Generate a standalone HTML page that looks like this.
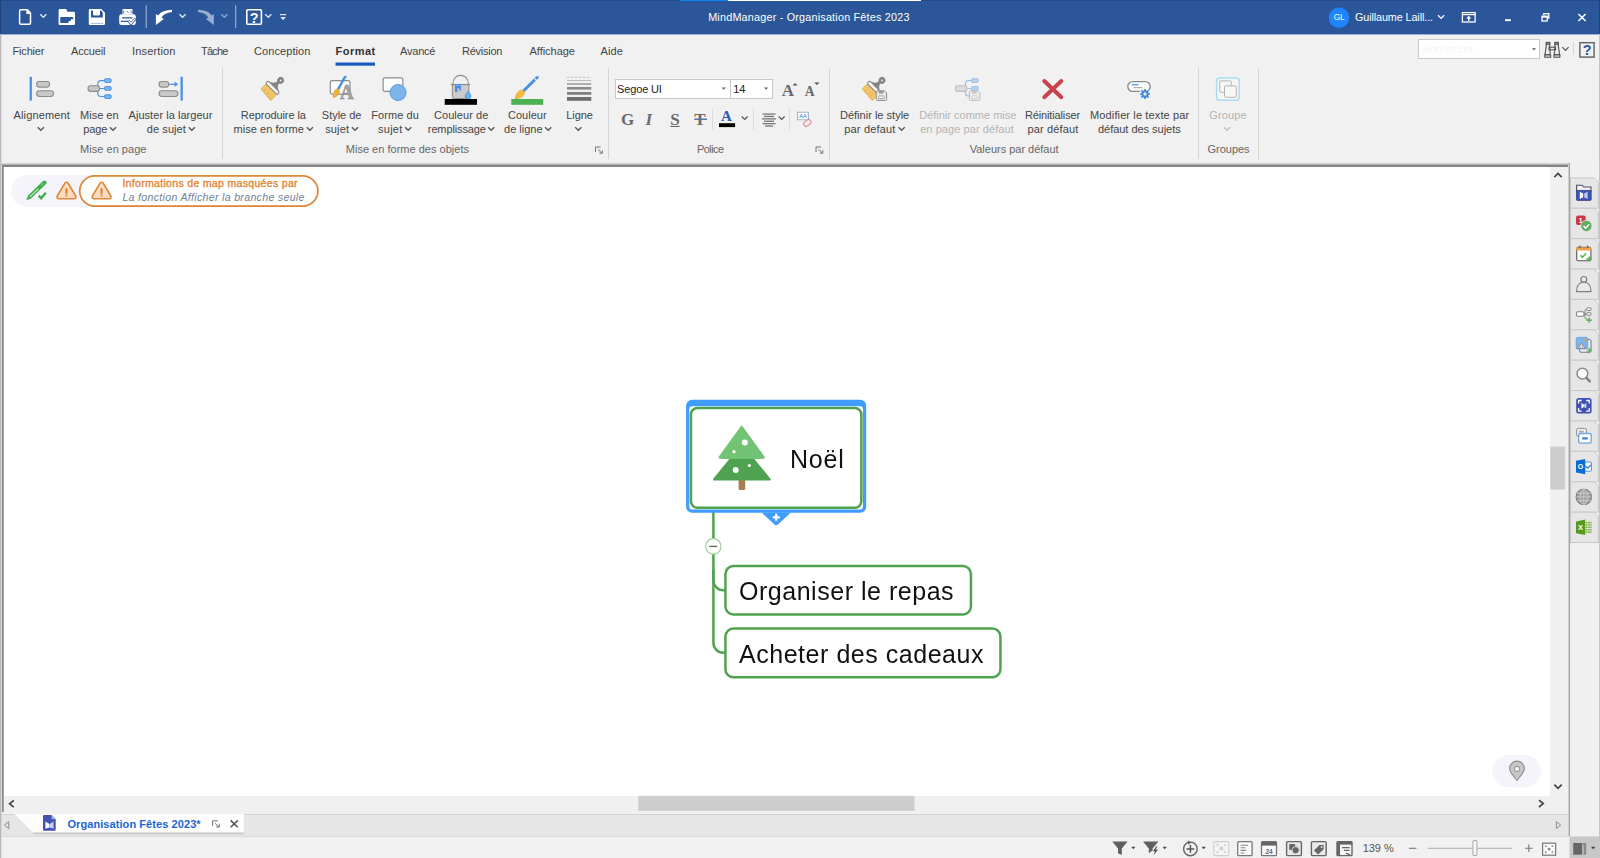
<!DOCTYPE html>
<html lang="fr"><head><meta charset="utf-8"><title>MindManager - Organisation Fêtes 2023</title>
<style>
html,body{margin:0;padding:0;}
body{width:1600px;height:858px;position:relative;overflow:hidden;background:#f1f1f1;font-family:"Liberation Sans",sans-serif;}
.abs{position:absolute;}
.t{position:absolute;white-space:pre;line-height:1;font-family:"Liberation Sans",sans-serif;}
#titlebar{left:0;top:0;width:1600px;height:34.4px;background:#2b579a;}
#ribbon{left:0;top:34px;width:1600px;height:129px;background:#f1f1f1;}
#canvas{left:3.5px;top:167px;width:1546.8px;height:628.8px;background:#fff;}
#hscroll{left:3.5px;top:795.8px;width:1564px;height:17.5px;background:#f0f0f0;}
#vscroll{left:1550.3px;top:167px;width:17.5px;height:628.8px;background:#f0f0f0;}
#tabbar{left:0;top:813.5px;width:1569px;height:22.5px;background:#e6e6e6;border-top:1px solid #d2d2d2;box-sizing:border-box;}
#status{left:0;top:836px;width:1600px;height:22px;background:#f1f1f1;border-top:1px solid #dadada;box-sizing:border-box;}
#side{left:1570px;top:163px;width:30px;height:673px;background:#f0f0f0;}
svg#ic{position:absolute;left:0;top:0;width:1600px;height:858px;}
.sep{position:absolute;width:1px;background:#d4d4d4;top:68px;height:91px;}
.combo{position:absolute;background:#fff;border:1px solid #c8c8c8;box-sizing:border-box;}

</style></head>
<body>
<div id="titlebar" class="abs"></div>
<div id="ribbon" class="abs"></div>
<div class="sep" style="left:222px"></div>
<div class="sep" style="left:608px"></div>
<div class="sep" style="left:829px"></div>
<div class="sep" style="left:1198px"></div>
<div class="sep" style="left:1258px"></div>
<div class="combo" style="left:615px;top:78.5px;width:115.5px;height:20.5px"></div>
<div class="combo" style="left:729.5px;top:78.5px;width:43px;height:20.5px"></div>
<div class="combo" style="left:1418.3px;top:39.3px;width:122px;height:19.8px"></div>
<div id="canvas" class="abs"></div>
<div id="hscroll" class="abs"></div>
<div id="vscroll" class="abs"></div>
<div id="tabbar" class="abs"></div>
<div id="status" class="abs"></div>
<div id="side" class="abs"></div>

<svg id="ic" viewBox="0 0 1600 858" width="1600" height="858">
<g id="titlebar-icons">
<rect x="0" y="0" width="1600" height="1" fill="#254a86"/>
<rect x="0" y="0" width="1" height="34.400" fill="#21417a"/>
<rect x="1599" y="0" width="1" height="34.400" fill="#21417a"/>
<rect x="0" y="33.400" width="1600" height="1" fill="#27529a"/>
<rect x="680" y="0" width="48" height="1" fill="#0a84ee"/>
<rect x="728" y="0" width="193" height="1" fill="#fdfdfd"/>
<!-- new document -->
<path d="M20.8 9.7h6.6l3.1 3.2v10.2a1.2 1.2 0 0 1-1.2 1.2h-8.5a1.2 1.2 0 0 1-1.2-1.2v-12.200a1.200 1.200 0 0 1 1.200-1.200z" fill="none" stroke="#fff" stroke-width="1.5" stroke-linejoin="round"/>
<path d="M26.400 9.700v4.400h4.300z" fill="#fff"/>
<path d="M40.200 14.200l3.100 3.100 3.100-3.100" fill="none" stroke="#dfe6f3" stroke-width="1.300"/>
<!-- open folder -->
<path d="M59.800 9h6.400l1.200 2.800h6.400a1.200 1.200 0 0 1 1.200 1.200v10.800a1.200 1.200 0 0 1-1.200 1.200h-14a1.200 1.200 0 0 1-1.200-1.200v-13.600a1.200 1.200 0 0 1 1.200-1.200z" fill="#fff"/>
<path d="M61 17h11.200a1 1 0 0 1 1 1v1.200h-2.400v1.800h-2.200v1.900h-7.600a.8.800 0 0 1-.8-.8v-4.300a.8.800 0 0 1 .8-.8z" fill="#2b579a"/>
<!-- save -->
<path d="M90 9h11.300l3.700 3.700v11.100a1.200 1.200 0 0 1-1.200 1.200h-13.800a1.200 1.200 0 0 1-1.200-1.200v-13.600a1.200 1.200 0 0 1 1.200-1.200z" fill="#fff"/>
<path d="M91 10.600h2v3.300a1.500 1.500 0 0 0 1.500 1.500h4a1.500 1.500 0 0 0 1.500-1.500v-3.300h1l1.800 1.900v5.100h-11.800z" fill="#2b579a"/>
<path d="M91.500 23.400h11.500" stroke="#2b579a" stroke-width=".7" stroke-dasharray="1.200 .8" fill="none"/>
<!-- print -->
<path d="M122.500 9h10v5.500h-10z" fill="#fff"/>
<path d="M123.600 10.500v3M131.200 10.500v3M126.800 11l1.800 2" stroke="#2b579a" stroke-width=".7" fill="none"/>
<path d="M121.500 14.300h12a2.300 2.300 0 0 1 2.300 2.300v6.200a2.200 2.200 0 0 1-2.200 2.200h-12.200a2.200 2.200 0 0 1-2.200-2.200v-6.200a2.300 2.300 0 0 1 2.300-2.300z" fill="#fff"/>
<path d="M122 17.900h10.500M121 21.400h8" stroke="#2b579a" stroke-width="1.100" fill="none"/>
<path d="M128.400 20.800l2.600 2.900 4.400-5" stroke="#2b579a" stroke-width="2.600" fill="none"/>
<path d="M128.800 21l2.200 2.500 4-4.600" stroke="#fff" stroke-width="1.300" fill="none"/>
<rect x="145.600" y="5.200" width="1.300" height="22.800" fill="#8ea3c8"/>
<!-- undo -->
<path d="M172 9.8C166 10 160.5 11.8 158.2 15.6L155.9 14L155.9 25L163.8 18.9L161.6 17.4C163.5 14.6 167 12.6 172 12.1Z" fill="#fff"/>
<path d="M179.400 14.200l3.100 3.100 3.100-3.100" fill="none" stroke="#dfe6f3" stroke-width="1.300"/>
<!-- redo (disabled) -->
<path d="M198 9.8C204 10 209.5 11.8 211.5 15.6L213.800 14L213.8 25L206 18.9L208.2 17.4C206.3 14.6 203 12.6 198 12.1Z" fill="#98aed0"/>
<path d="M221.200 14.200l3.100 3.100 3.100-3.100" fill="none" stroke="#8ea3c8" stroke-width="1.300"/>
<rect x="235" y="5.200" width="1.300" height="22.800" fill="#8ea3c8"/>
<!-- help -->
<rect x="246.800" y="9.800" width="14.600" height="14.400" rx="1" fill="none" stroke="#fff" stroke-width="1.600"/>
<text x="254.100" y="22.500" font-family="Liberation Sans, sans-serif" font-weight="bold" font-size="14.500" fill="#fff" text-anchor="middle">?</text>
<path d="M265.200 14.200l3.100 3.100 3.100-3.100" fill="none" stroke="#dfe6f3" stroke-width="1.300"/>
<path d="M280 14.600h6.200" stroke="#dfe6f3" stroke-width="1.200"/>
<path d="M280.300 17h5.600l-2.800 3.200z" fill="#dfe6f3"/>
<!-- account -->
<circle cx="1339" cy="17.750" r="10.200" fill="#1e84ff"/>
<path d="M1438 15.300l3.100 3.100 3.100-3.100" fill="none" stroke="#fff" stroke-width="1.300"/>
<!-- ribbon display -->
<rect x="1462.400" y="12.600" width="12.700" height="9.400" fill="none" stroke="#fff" stroke-width="1.300"/>
<path d="M1462.400 14.600h12.700" stroke="#fff" stroke-width="1.200"/>
<path d="M1468.750 15.800l2.600 2.800h-1.800v2.200h-1.600v-2.200h-1.800z" fill="#fff"/>
<!-- min / restore / close -->
<rect x="1505" y="19.200" width="5.800" height="1.900" fill="#fff"/>
<path d="M1543.800 15.200v-1.600h5v4.400h-1.600" fill="none" stroke="#fff" stroke-width="1.300"/>
<rect x="1542" y="16.200" width="5.200" height="4.800" fill="none" stroke="#fff" stroke-width="1.300"/>
<path d="M1542 17h5.200" stroke="#fff" stroke-width="1.400"/>
<path d="M1578.400 14l7.200 7M1585.600 14l-7.200 7" stroke="#fff" stroke-width="1.500"/>
</g>
<g id="ribbon-icons">
<!-- tab underline -->
<rect x="335.500" y="62.500" width="39.500" height="3.200" fill="#185abd"/>
<!-- search area -->
<path d="M1531.900 48.200h4.200l-2.100 2.300z" fill="#666"/>
<g fill="none" stroke="#5a5a5a" stroke-width="1.200">
<rect x="1546.200" y="42.400" width="3.600" height="1.800"/><rect x="1554.800" y="42.400" width="3.600" height="1.800"/>
<path d="M1546.500 44.200l-1.500 10.500h5.200l-.6-10.500zM1558.100 44.200l1.500 10.500h-5.200l.6-10.500z"/>
<rect x="1544.800" y="54.800" width="5.800" height="2.400"/><rect x="1554" y="54.800" width="5.800" height="2.400"/>
<rect x="1549" y="47.200" width="6.600" height="2.600"/>
</g>
<path d="M1562.400 47.200l3.100 3.100 3.100-3.100" fill="none" stroke="#555" stroke-width="1.200"/>
<rect x="1573" y="42.800" width="1" height="12.500" fill="#d8d8d8"/>
<rect x="1579.900" y="42.700" width="14.200" height="14.400" fill="none" stroke="#606060" stroke-width="1.400"/>
<text x="1587.100" y="55.200" font-family="Liberation Sans, sans-serif" font-weight="bold" font-size="14.500" fill="#2b579a" text-anchor="middle">?</text>

<!-- Alignement -->
<rect x="29.600" y="76.800" width="2.300" height="23.800" fill="#4a90e2"/>
<rect x="36.600" y="81.500" width="13" height="5.600" rx="2.800" fill="#c8c8c8" stroke="#8c8c8c" stroke-width="1.100"/>
<rect x="36.600" y="90.700" width="17" height="5.800" rx="2.900" fill="#c8c8c8" stroke="#8c8c8c" stroke-width="1.100"/>
<!-- Mise en page -->
<g fill="none" stroke="#4a90e2" stroke-width="1.100">
<path d="M100 88.500h4.500M104.500 80.600h-3.500a3.200 3.200 0 0 0-3.200 3.200v9.500a3.200 3.200 0 0 0 3.200 3.200h3.500"/>
</g>
<rect x="88" y="85.800" width="11.600" height="5.600" rx="2.800" fill="#c8c8c8" stroke="#8c8c8c" stroke-width="1.100"/>
<g fill="#7db7f0" stroke="#4a90e2" stroke-width="1">
<rect x="104.500" y="78.800" width="6.600" height="3.600" rx="1"/><rect x="104.500" y="86.600" width="6.600" height="3.600" rx="1"/><rect x="104.500" y="94.800" width="6.600" height="3.600" rx="1"/>
</g>
<!-- Ajuster la largeur -->
<rect x="180.500" y="76.800" width="2.300" height="23.800" fill="#4a90e2"/>
<rect x="159" y="81.500" width="9.800" height="5.600" rx="2.800" fill="#c8c8c8" stroke="#8c8c8c" stroke-width="1.100"/>
<rect x="159" y="90.700" width="19" height="5.800" rx="2.900" fill="#c8c8c8" stroke="#8c8c8c" stroke-width="1.100"/>
<path d="M169.400 84.300h6" stroke="#4a90e2" stroke-width="1.300"/><path d="M174.600 81.600l3.600 2.700-3.600 2.700z" fill="#4a90e2"/>
<path d="M37.7 127.200l3.100 3.100 3.100-3.100" fill="none" stroke="#555" stroke-width="1.300"/>
<path d="M109.9 127.200l3.100 3.100 3.100-3.100" fill="none" stroke="#555" stroke-width="1.300"/>
<path d="M188.7 127.200l3.100 3.100 3.100-3.100" fill="none" stroke="#555" stroke-width="1.300"/>
<path d="M306.8 127.200l3.100 3.100 3.100-3.100" fill="none" stroke="#555" stroke-width="1.300"/>
<path d="M351.9 127.200l3.100 3.100 3.100-3.100" fill="none" stroke="#555" stroke-width="1.300"/>
<path d="M405.1 127.200l3.100 3.100 3.100-3.100" fill="none" stroke="#555" stroke-width="1.300"/>
<path d="M488.1 127.200l3.100 3.100 3.100-3.100" fill="none" stroke="#555" stroke-width="1.300"/>
<path d="M545.1 127.200l3.100 3.100 3.100-3.100" fill="none" stroke="#555" stroke-width="1.300"/>
<path d="M575.2 127.200l3.100 3.100 3.100-3.100" fill="none" stroke="#555" stroke-width="1.300"/>
<path d="M898.5 127.200l3.100 3.100 3.100-3.100" fill="none" stroke="#555" stroke-width="1.300"/>
<path d="M1223.9 127.200l3.100 3.100 3.100-3.100" fill="none" stroke="#c0c0c0" stroke-width="1.300"/>
<!-- Reproduire la mise en forme : brush -->
<g id="brush1" transform="translate(272.5 88) rotate(45)">
<path d="M-1.3-8.500C-1.300-5-4-3.400-7.600-1.800L7.600-1.800C4-3.400 1.300-5 1.300-8.500Z" fill="#858585"/>
<circle cx=".400" cy="-11.100" r="2.150" fill="none" stroke="#858585" stroke-width="2.500"/>
<path d="M-7.500 1.500L7.500 1.500L7.800 10.200L6.300 9.300L5.200 10.300L3.600 9L2.200 10L.600 8.800L-.900 9.800L-2.400 8.600L-3.800 9.500L-5.200 8.300L-6.400 9.200L-7.600 8.200Z" fill="#f2c568" stroke="#dba640" stroke-width=".700" stroke-linejoin="round"/>
<path d="M-3.800 5v4M.600 5.500v3M3.600 4.500v4" stroke="#dba640" stroke-width=".600" fill="none"/>
<rect x="-8.200" y="-2" width="16.400" height="3.600" rx="1.700" fill="#f6f6f6" stroke="#858585" stroke-width="1"/>
</g>
<!-- Style de sujet -->
<rect x="330.300" y="80.600" width="19.700" height="13.500" rx="1.800" fill="#fdfdfd" stroke="#8c8c8c" stroke-width="1.200"/>
<path d="M345.800 75.800l1.400.9-.6 1.200-1.600-1z" fill="#7db7f0"/>
<path d="M335.400 91.200l2.200 1.400-1 3.400-2.800 1.400-.4-3.200z" fill="#f0b84a" stroke="#d99a2b" stroke-width=".400"/>
<!-- Forme du sujet -->
<rect x="383.100" y="77.800" width="19.700" height="13.500" rx="1.800" fill="#fdfdfd" stroke="#8c8c8c" stroke-width="1.200"/>
<circle cx="398.100" cy="92.500" r="8" fill="#7db5e8" stroke="#5a9de0" stroke-width="1"/>
<!-- Couleur de remplissage -->
<path d="M452.700 84.500c0-12.200 15.800-12.200 15.800 0" fill="none" stroke="#8c8c8c" stroke-width="1.100"/>
<path d="M452.300 84.600h16.600v12a2 2 0 0 1-2 2h-12.600a2 2 0 0 1-2-2z" fill="#cbcbcb" stroke="#8c8c8c" stroke-width="1"/>
<path d="M450.800 84.500h19.400" stroke="#8c8c8c" stroke-width="1.100"/>
<path d="M455 84h6v6.400h-1.600v-2.200h-2v3.800h-2.400z" fill="#4a90e2"/>
<path d="M455.600 85.400h4.800" stroke="#8ec0f5" stroke-width=".700"/>
<path d="M468 91.200c1.600 2 3 3.500 3 5a3 3 0 0 1-6 0c0-1.500 1.400-3 3-5z" fill="#6fb0ee" stroke="#4a90e2" stroke-width=".700"/>
<rect x="444.700" y="99" width="32.300" height="5.800" fill="#000"/>
<!-- Couleur de ligne -->
<path d="M538.560 78.060L536.440 75.940L522.440 89.940L524.560 92.060Z" fill="#4a90e2"/>
<path d="M536.900 79.700L534.800 77.600L533.700 78.700L535.800 80.800Z" fill="#cfd8e6"/>
<path d="M538.900 76.900l-.8-.8-1.700.9 1.600 1.600z" fill="#4a90e2"/>
<path d="M522.440 89.940L524.560 92.060C525 95 521 98.500 515.300 98.900C515.600 93.500 519 89.800 522.440 89.940Z" fill="#f3bd3a" stroke="#d99a2b" stroke-width=".600"/>
<rect x="511.300" y="99" width="31.900" height="5.800" fill="#4caf50"/>
<!-- Ligne -->
<path d="M567 77.400h24.300" stroke="#b8b8b8" stroke-width=".800" stroke-dasharray="2.600 1.400"/>
<rect x="567" y="80" width="24.300" height=".800" fill="#b0b0b0"/>
<rect x="567" y="83.200" width="24.300" height="1.600" fill="#a0a0a0"/>
<rect x="567" y="87" width="24.300" height="2.600" fill="#8c8c8c"/>
<rect x="567" y="92" width="24.300" height="2.800" fill="#808080"/>
<rect x="567" y="97" width="24.300" height="3.800" fill="#6e6e6e"/>
<!-- dialog launchers -->
<g fill="none" stroke="#777" stroke-width="1">
<path d="M595.500 152v-5h5.200M598 149.500l4 3.600M602.300 150.200v3h-3"/>
<path d="M816 152v-5h5.200M818.500 149.500l4 3.600M822.800 150.200v3h-3"/>
</g>
<!-- A in style icon -->
<text x="346.900" y="98.900" font-family="Liberation Serif, serif" font-weight="bold" font-size="21" fill="#a4a4a4" stroke="#858585" stroke-width=".500" text-anchor="middle" textLength="13.600" lengthAdjust="spacingAndGlyphs">A</text>
<path d="M346.350 76.830L344.250 75.670L337.050 88.820L339.150 89.980Z" fill="#4a90e2"/>
<path d="M337.050 88.820L339.150 89.980C340.400 92 338.600 95.200 333.400 97.600C332.600 93.600 334.400 90 337.050 88.820Z" fill="#f0b429" stroke="#d99a2b" stroke-width=".500"/>
<path d="M335.400 91.200l2.200 1.400-1 3.400-2.800 1.400-.4-3.200z" fill="#f0b84a" stroke="#d99a2b" stroke-width=".400"/>
<!-- combos arrows -->
<path d="M721.500 87.400h4.400l-2.200 2.400z" fill="#666"/>
<path d="M763.900 87.400h4.400l-2.200 2.400z" fill="#666"/>
<!-- grow/shrink markers -->
<path d="M792.600 85.400h5l-2.500-2.500z" fill="#555"/>
<path d="M814.200 82.600h5.400l-2.700 2.500z" fill="#555"/>
<!-- S underline, T strike -->
<rect x="670.400" y="125.900" width="9.200" height="1.100" fill="#6a6a6a"/>
<rect x="694.200" y="118.600" width="12.800" height="1.200" fill="#2a5db0"/>
<rect x="712" y="108.400" width="1" height="21.600" fill="#dcdcdc"/>
<rect x="719" y="123.200" width="16.100" height="3.900" fill="#000"/>
<path d="M741.700 116.500l3 3 3-3" fill="none" stroke="#555" stroke-width="1.200"/>
<rect x="753" y="108.400" width="1" height="21.600" fill="#dcdcdc"/>
<!-- align icon -->
<g fill="#777">
<rect x="762.500" y="113.400" width="13" height="1.300"/><rect x="764" y="115.800" width="10" height="1.300"/><rect x="762" y="118.200" width="14" height="1.300"/><rect x="764" y="120.600" width="10" height="1.300"/><rect x="762.500" y="123" width="13" height="1.300"/><rect x="765" y="125.400" width="8" height="1.300"/>
</g>
<path d="M778.800 116.500l2.900 2.900 2.900-2.900" fill="none" stroke="#555" stroke-width="1.200"/>
<rect x="789" y="108.400" width="1" height="21.600" fill="#dcdcdc"/>
<!-- clear format -->
<rect x="797.500" y="112.200" width="11" height="7.600" fill="#f7fbff" stroke="#8aa9c9" stroke-width=".800"/>
<text x="803" y="118.200" font-family="Liberation Sans, sans-serif" font-size="5.500" fill="#3a78c2" text-anchor="middle">AA</text>
<rect x="-3.800" y="-2.300" width="7.600" height="4.600" rx="1.300" transform="translate(807.300 123) rotate(-38)" fill="#fbeaea" stroke="#d98a8a" stroke-width="1"/>
<g id="brush2" transform="translate(873.9 88) rotate(45)">
<path d="M-1.3-8.500C-1.300-5-4-3.400-7.600-1.800L7.600-1.800C4-3.400 1.300-5 1.300-8.500Z" fill="#858585"/>
<circle cx=".400" cy="-11.100" r="2.150" fill="none" stroke="#858585" stroke-width="2.500"/>
<path d="M-7.500 1.500L7.500 1.500L7.800 10.200L6.300 9.300L5.200 10.300L3.600 9L2.200 10L.600 8.800L-.900 9.800L-2.400 8.600L-3.800 9.500L-5.200 8.300L-6.400 9.200L-7.600 8.200Z" fill="#f2c568" stroke="#dba640" stroke-width=".700" stroke-linejoin="round"/>
<path d="M-3.800 5v4M.600 5.500v3M3.600 4.500v4" stroke="#dba640" stroke-width=".600" fill="none"/>
<rect x="-8.200" y="-2" width="16.400" height="3.600" rx="1.700" fill="#f6f6f6" stroke="#858585" stroke-width="1"/>
</g>
<!-- disk overlay -->
<g id="disk1">
<path d="M877.200 90.800h7.200l2.200 2.200v6.400a1 1 0 0 1-1 1h-8.400a1 1 0 0 1-1-1v-7.600a1 1 0 0 1 1-1z" fill="#e9e9e9" stroke="#8a8a8a" stroke-width="1"/>
<rect x="878.800" y="90.800" width="4.600" height="2.800" fill="#9a9a9a"/>
<rect x="878.600" y="96" width="5.600" height="2.600" rx=".600" fill="#fff" stroke="#8a8a8a" stroke-width=".800"/>
</g>
<!-- disabled layout icon -->
<g opacity=".5">
<g fill="none" stroke="#4a90e2" stroke-width="1.100"><path d="M967.500 88.500h4M971.500 80.600h-3a3 3 0 0 0-3 3v9.500a3 3 0 0 0 3 3h1"/></g>
<rect x="955.400" y="85.800" width="11.600" height="5.600" rx="2.800" fill="#c8c8c8" stroke="#8c8c8c" stroke-width="1.100"/>
<g fill="#7db7f0" stroke="#4a90e2" stroke-width="1"><rect x="971.600" y="78.800" width="6.600" height="3.600" rx="1"/><rect x="971.600" y="86.600" width="6.600" height="3.600" rx="1"/></g>
<g transform="translate(93.200 0)">
<path d="M877.200 90.800h7.200l2.200 2.200v6.400a1 1 0 0 1-1 1h-8.400a1 1 0 0 1-1-1v-7.600a1 1 0 0 1 1-1z" fill="#e9e9e9" stroke="#8a8a8a" stroke-width="1"/>
<rect x="878.800" y="90.800" width="4.600" height="2.800" fill="#9a9a9a"/>
<rect x="878.600" y="96" width="5.600" height="2.600" rx=".600" fill="#fff" stroke="#8a8a8a" stroke-width=".800"/>
</g>
</g>
<!-- red X -->
<path d="M1044.300 81l17 16.200M1061.300 81l-17 16.200" stroke="#c9424a" stroke-width="4" stroke-linecap="round"/>
<!-- modify text icon -->
<rect x="1127.800" y="81.600" width="22.400" height="9.800" rx="4.900" fill="#fafafa" stroke="#8c8c8c" stroke-width="1.400"/>
<path d="M1132 84.800h6.600" stroke="#4a90e2" stroke-width="1.200"/><path d="M1133.600 87.600h8.400" stroke="#a8a8a8" stroke-width="1.100"/>
<circle cx="1145" cy="94" r="5.800" fill="#f1f1f1"/>
<g transform="translate(1145 94)" stroke="#3d86d8" fill="none">
<circle r="2.600" stroke-width="1.900"/>
<path d="M0-5v2M0 3v2M-5 0h2M3 0h2M-3.540-3.540l1.420 1.420M2.120 2.120l1.420 1.420M-3.540 3.540l1.420-1.420M2.120-2.120l1.420-1.420" stroke-width="1.700"/>
</g>
<!-- Groupe -->
<rect x="1216.600" y="77.900" width="22.600" height="22.400" rx="3.200" fill="#f7f7f7" stroke="#a9ddf3" stroke-width="1.500"/>
<rect x="1219.700" y="80.900" width="11.600" height="11.400" rx=".800" fill="#f7f7f7" stroke="#b4b4b4" stroke-width="1"/>
<rect x="1224.500" y="85.900" width="11.800" height="11.400" rx=".800" fill="#f7f7f7" stroke="#b4b4b4" stroke-width="1"/>
</g>
<g id="canvas-art">
<!-- frame lines -->
<rect x="0" y="34" width="1.300" height="824" fill="#b8b8b8"/>
<rect x="1599" y="34" width="1" height="824" fill="#c4c4c4"/>
<rect x="0" y="162.800" width="1570" height="1.200" fill="#d6d6d6"/>
<rect x="0" y="164" width="1568" height="1" fill="#b0b0b0"/>
<rect x="2" y="165" width="1566" height="2" fill="#848484"/>
<rect x="2" y="165" width="1.700" height="647" fill="#848484"/>
<rect x="1568" y="163" width="1" height="673" fill="#cfcfcf"/>
<rect x="1569" y="163" width="1" height="673" fill="#a4a4a4"/>
<!-- info pills -->
<rect x="11.300" y="175" width="120" height="32" rx="16" fill="#f4f4fa"/>
<rect x="79.700" y="175.850" width="238.200" height="30.300" rx="15.150" fill="#fff" stroke="#de8435" stroke-width="1.700"/>
<!-- pen + check -->
<g transform="translate(36.250 190.600) rotate(-44)">
<path d="M-13.900 0l4.600-2.100h20.800a2.100 2.100 0 0 1 0 4.200h-20.800z" fill="#3bb04a"/>
<path d="M-9 0h12" stroke="#d5f0da" stroke-width="1" fill="none"/>
<path d="M7 -.300h3" stroke="#bfe8c6" stroke-width=".800" fill="none"/>
</g>
<path d="M38.700 195.600l2.500 2.700 4.600-5.500" fill="none" stroke="#3bb04a" stroke-width="2.300"/>
<!-- warnings -->
<g id="warn">
<path d="M64.95 183.11A1.80 1.80 0 0 1 68.05 183.11L75.72 196.03A1.80 1.80 0 0 1 74.17 198.75L58.83 198.75A1.80 1.80 0 0 1 57.28 196.03Z" fill="#f9dcc0" stroke="#e0883c" stroke-width="1.700"/>
<rect x="65.500" y="188.300" width="1.900" height="6" rx=".500" fill="#df7a22"/><rect x="65.500" y="195" width="1.900" height="1.600" rx=".500" fill="#df7a22"/>
</g>
<g transform="translate(35.100 0)">
<path d="M64.95 183.11A1.80 1.80 0 0 1 68.05 183.11L75.72 196.03A1.80 1.80 0 0 1 74.17 198.75L58.83 198.75A1.80 1.80 0 0 1 57.28 196.03Z" fill="#f9dcc0" stroke="#e0883c" stroke-width="1.700"/>
<rect x="65.500" y="188.300" width="1.900" height="6" rx=".500" fill="#df7a22"/><rect x="65.500" y="195" width="1.900" height="1.600" rx=".500" fill="#df7a22"/>
</g>
<!-- mind map -->
<g fill="none" stroke="#4fa24f" stroke-width="2.500">
<path d="M713.400 512v68.300a10 10 0 0 0 10 10h2"/>
<path d="M713.400 570v72.800a10 10 0 0 0 10 10h2"/>
</g>
<rect x="686.100" y="399.800" width="180.100" height="112.900" rx="6" fill="#409cff"/>
<path d="M761.500 512.500h29.400l-13 12a2.500 2.500 0 0 1-3.400 0z" fill="#409cff"/>
<path d="M776.200 513.800v7M772.700 517.300h7" stroke="#fff" stroke-width="2.200"/>
<rect x="689.300" y="406.300" width="173.700" height="103.200" rx="3" fill="#fff"/>
<rect x="690.950" y="408.050" width="170.400" height="99.800" rx="6.500" fill="#fff" stroke="#4fa24f" stroke-width="2.500"/>
<rect x="725.450" y="566.050" width="245.500" height="48.400" rx="8" fill="#fff" stroke="#4fa24f" stroke-width="2.500"/>
<rect x="725.450" y="628.450" width="275" height="48.700" rx="8" fill="#fff" stroke="#4fa24f" stroke-width="2.500"/>
<circle cx="713.300" cy="546.400" r="7.700" fill="#fff" stroke="#9fce9f" stroke-width="1.200"/>
<rect x="709.400" y="545.700" width="7.800" height="1.400" fill="#666"/>
<!-- tree -->
<rect x="738.600" y="478" width="6.600" height="12" rx="1.600" fill="#a67c52"/>
<path d="M741.900 443.500l28.600 35.200a1.200 1.200 0 0 1-.9 1.900h-55.400a1.200 1.200 0 0 1-.9-1.900z" fill="#4fa350"/>
<path d="M741.700 425.800l22.400 30.800a1.200 1.200 0 0 1-1 1.900h-42.800a1.200 1.200 0 0 1-1-1.900z" fill="#72c474" stroke="#72c474" stroke-width="1" stroke-linejoin="round"/>
<circle cx="744.800" cy="442.500" r="3" fill="#fff"/><circle cx="734" cy="451.700" r="1.600" fill="#fff"/>
<circle cx="735.700" cy="470" r="3" fill="#fff"/><circle cx="749.400" cy="465.500" r="1.600" fill="#fff"/>
<!-- location pill -->
<rect x="1492.400" y="755.100" width="48.600" height="32.100" rx="16" fill="#f4f4fa"/>
<path d="M1517 780.400c-3.600-4.600-7.400-8-7.400-11.900a7.400 7.400 0 0 1 14.800 0c0 3.900-3.800 7.300-7.400 11.900z" fill="#c6c6c6" stroke="#8e8e8e" stroke-width="1.100"/>
<circle cx="1517" cy="768.900" r="2.500" fill="#fff" stroke="#9a9a9a" stroke-width="1.100"/>
<!-- scrollbars -->
<rect x="1550.300" y="446.600" width="14.800" height="43" fill="#cdcdcd"/>
<rect x="638.300" y="795.800" width="276.100" height="15" fill="#cdcdcd"/>
<g fill="none" stroke="#444" stroke-width="1.700">
<path d="M1554.300 177.200l3.700-3.700 3.700 3.700"/>
<path d="M1554.300 784.600l3.700 3.700 3.700-3.700"/>
<path d="M13.800 800.400l-4.200 3.400 4.200 3.400"/>
<path d="M1539 800.200l4.200 3.400-4.200 3.400"/>
</g>
</g>
<g id="bottom-art">
<!-- document tab -->
<path d="M14.600 814h229.200v18.600h-210.600z" fill="#fdfdfd"/>
<path d="M33.200 833.500h210.600" stroke="#cbcbcb" stroke-width="1.800"/>
<path d="M8.800 821.600l-4.400 3.500 4.400 3.500z" fill="none" stroke="#8c8c8c" stroke-width="1"/>
<path d="M1556.300 821.600l4.400 3.500-4.400 3.500z" fill="none" stroke="#8c8c8c" stroke-width="1"/>
<!-- doc icon -->
<path d="M44.200 815h7.300l4.200 4.200v10.300a1.200 1.200 0 0 1-1.200 1.200h-10.300a1.200 1.200 0 0 1-1.200-1.200v-13.300a1.200 1.200 0 0 1 1.200-1.200z" fill="#3f51b5"/>
<path d="M51.500 815v4.200h4.200z" fill="#9fa8da"/>
<path d="M45.400 821.600l4 2.400v3.400l-4 1.400z" fill="#fff"/><path d="M53.600 821.600l-4.200 2.400v3.400l4.200 1.400z" fill="#c5cae9"/>
<!-- popout + close -->
<g fill="none" stroke="#777" stroke-width="1"><path d="M212.500 826v-5.200h5.400M215 823.300l4 3.600M219.300 823.800v3.200h-3.200"/></g>
<path d="M230.600 820.400l7.200 6.900M237.800 820.400l-7.200 6.900" stroke="#555" stroke-width="1.500"/>
<!-- status bar icons -->
<g id="funnel1"><path d="M1112.200 841.600h15.400l-5.800 6.800v6.600l-3.800-1.800v-4.800z" fill="#606060"/></g>
<path d="M1131.200 846.800h4.200l-2.100 2.400z" fill="#444"/>
<path d="M1143 841.600h15.400l-5.800 6.800v2l-3.800 2.800v-4.800z" fill="#606060"/>
<path d="M1156.200 846.600l-3.400 4.600h2.200l-1.600 4.200 4.600-5.600h-2.400l1.800-3.200z" fill="#505050"/>
<path d="M1162.600 846.800h4.200l-2.100 2.400z" fill="#444"/>
<circle cx="1190.400" cy="848.900" r="6.800" fill="none" stroke="#666" stroke-width="1.400"/>
<path d="M1190.400 845v7.800M1186.500 848.900h7.800" stroke="#555" stroke-width="1.500"/>
<path d="M1187.600 840.600l4 1.600-3 2.600z" fill="#666"/>
<path d="M1201.600 846.800h4.200l-2.100 2.400z" fill="#444"/>
<rect x="1213.900" y="841.600" width="14.800" height="14" rx="1" fill="#f4f4f4" stroke="#cfcfcf" stroke-width="1.100"/>
<g fill="#d0d0d0"><circle cx="1221.300" cy="848.600" r="2"/><rect x="1216.600" y="844.200" width="1.800" height="1.800"/><rect x="1224.200" y="844.200" width="1.800" height="1.800"/><rect x="1216.600" y="851.200" width="1.800" height="1.800"/><rect x="1224.200" y="851.200" width="1.800" height="1.800"/></g>
<rect x="1237.700" y="841.600" width="14.400" height="14" rx="1.200" fill="#fafafa" stroke="#777" stroke-width="1.300"/>
<path d="M1240.600 845.200h7.400M1240.600 847.800h4.600M1240.600 850.400h5.600M1240.600 853h3.600" stroke="#888" stroke-width="1.100"/>
<rect x="1261.500" y="841.600" width="15" height="14" rx="1.200" fill="#fafafa" stroke="#777" stroke-width="1.300"/>
<rect x="1261.500" y="841.600" width="15" height="4" fill="#666"/>
<text x="1269" y="853.600" font-family="Liberation Sans, sans-serif" font-weight="bold" font-size="6.500" fill="#666" text-anchor="middle">24</text>
<rect x="1286.600" y="841.600" width="14.800" height="14" rx="1.200" fill="#e8e8e8" stroke="#666" stroke-width="1.400"/>
<rect x="1289.200" y="844" width="6" height="6" rx="1" fill="#666"/><circle cx="1295.600" cy="850.200" r="3.600" fill="#666" stroke="#e8e8e8" stroke-width=".800"/>
<rect x="1311.400" y="841.600" width="14.800" height="14" rx="1.200" fill="#e8e8e8" stroke="#666" stroke-width="1.400"/>
<path d="M1314 850.400l5.400-5.400h4.200v4.200l-5.400 5.400z" fill="#666"/><circle cx="1321.600" cy="847" r=".900" fill="#e8e8e8"/>
<rect x="1337" y="841.600" width="15" height="14" rx=".800" fill="#f4f4f4" stroke="#666" stroke-width="1.400"/>
<rect x="1337" y="841.600" width="15" height="3" fill="#666"/><rect x="1337" y="841.600" width="3" height="14" fill="#666"/>
<path d="M1342 847.600h7.600M1344 850.400h5.600M1346 853.200l4 1.600" stroke="#666" stroke-width="1.300"/>
<!-- zoom slider -->
<path d="M1409 848.300h7.400" stroke="#777" stroke-width="1.100"/>
<path d="M1427.700 848.300h84.500" stroke="#b0b0b0" stroke-width="1"/>
<rect x="1472.900" y="840.500" width="4" height="15" rx=".500" fill="#f6f6f6" stroke="#a8a8a8" stroke-width="1"/>
<path d="M1525 848.300h7.600M1528.800 844.500v7.600" stroke="#777" stroke-width="1.100"/>
<rect x="1542.600" y="843.200" width="13" height="12" fill="#fafafa" stroke="#777" stroke-width="1.200"/>
<g fill="#888"><circle cx="1549.100" cy="849.200" r="1.400"/><rect x="1545" y="845.400" width="1.600" height="1.600"/><rect x="1551.600" y="845.400" width="1.600" height="1.600"/><rect x="1545" y="851.400" width="1.600" height="1.600"/><rect x="1551.600" y="851.400" width="1.600" height="1.600"/></g>
<!-- panel button -->
<rect x="1569.500" y="837" width="30.500" height="21" fill="#c8c8c8"/>
<rect x="1573.200" y="843" width="9" height="11.700" fill="#666"/>
<path d="M1582.200 843h4v11.700h-2.600v-8.500z" fill="#8a8a8a"/>
<path d="M1591 846.800h4.400l-2.200 2.400z" fill="#444"/>
</g>
<g id="side-art">
<path d="M1570.5 177.85h23.500l4.400 4.400v25.99h-27.900z" fill="#e6e6e6" stroke="#c8c8c8" stroke-width="1"/>
<path d="M1570.5 208.24h23.500l4.400 4.400v25.99h-27.900z" fill="#e6e6e6" stroke="#c8c8c8" stroke-width="1"/>
<path d="M1570.5 238.63h23.500l4.400 4.400v25.99h-27.900z" fill="#e6e6e6" stroke="#c8c8c8" stroke-width="1"/>
<path d="M1570.5 269.02h23.500l4.400 4.400v25.99h-27.900z" fill="#e6e6e6" stroke="#c8c8c8" stroke-width="1"/>
<path d="M1570.5 299.41h23.500l4.400 4.400v25.99h-27.900z" fill="#e6e6e6" stroke="#c8c8c8" stroke-width="1"/>
<path d="M1570.5 329.80h23.500l4.400 4.400v25.99h-27.900z" fill="#e6e6e6" stroke="#c8c8c8" stroke-width="1"/>
<path d="M1570.5 360.19h23.500l4.400 4.400v25.99h-27.900z" fill="#e6e6e6" stroke="#c8c8c8" stroke-width="1"/>
<path d="M1570.5 390.58h23.500l4.400 4.400v25.99h-27.900z" fill="#e6e6e6" stroke="#c8c8c8" stroke-width="1"/>
<path d="M1570.5 420.97h23.500l4.400 4.400v25.99h-27.900z" fill="#e6e6e6" stroke="#c8c8c8" stroke-width="1"/>
<path d="M1570.5 451.36h23.500l4.400 4.400v25.99h-27.900z" fill="#e6e6e6" stroke="#c8c8c8" stroke-width="1"/>
<path d="M1570.5 481.75h23.500l4.400 4.400v25.99h-27.900z" fill="#e6e6e6" stroke="#c8c8c8" stroke-width="1"/>
<path d="M1570.5 512.14h23.500l4.400 4.400v25.99h-27.900z" fill="#e6e6e6" stroke="#c8c8c8" stroke-width="1"/>
<path d="M1576.600 185.2h5.600l1.400 1.800h7.400v4.400h-14.400z" fill="#f4f4f4" stroke="#4a4f5c" stroke-width="1.100"/>
<rect x="1576.500" y="190.4" width="14.700" height="10" rx=".800" fill="#3d55b5" stroke="#33417d" stroke-width=".800"/>
<path d="M1579.800 191.8l3.400 1.800v3.600l-3.400 1.800z" fill="#fff"/><path d="M1587.600 191.8l-3.400 1.800v3.600l3.400 1.800z" fill="#c5cae9"/>
<rect x="1576" y="215.4" width="9.700" height="9.700" rx="2" fill="#cb3a44"/>
<text x="1580.800" y="222.6" font-family="Liberation Sans, sans-serif" font-weight="bold" font-size="7" fill="#fff" text-anchor="middle">1</text>
<circle cx="1586.400" cy="225.9" r="5.600" fill="#5fae60" stroke="#e6e6e6" stroke-width=".800"/>
<path d="M1583.600 226.0l2 2.200 3.600-4" fill="none" stroke="#fff" stroke-width="1.500"/>
<rect x="1576.700" y="247.4" width="14.200" height="13.400" rx="1.500" fill="#fff" stroke="#5a5a5a" stroke-width="1.100"/>
<path d="M1576.200 250.6h15.200v-1.800a1.500 1.500 0 0 0-1.500-1.500h-12.200a1.500 1.500 0 0 0-1.500 1.500z" fill="#f0a04a"/>
<path d="M1579.800 245.6v2.400M1587.800 245.6v2.400" stroke="#5a5a5a" stroke-width="1.200"/>
<path d="M1580.400 255.2l2 2.200 3.600-4" fill="none" stroke="#5cb85c" stroke-width="1.600"/>
<path d="M1589.200 256.4v5.400M1586.500 259.1h5.400" stroke="#5cb85c" stroke-width="1.600"/>
<circle cx="1583.800" cy="279.4" r="2.900" fill="#e9e9e9" stroke="#7c7c7c" stroke-width="1.200"/>
<path d="M1576.600 291.6c0-6 3-9.400 7.200-9.400s7.200 3.400 7.200 9.400z" fill="#e9e9e9" stroke="#7c7c7c" stroke-width="1.200" stroke-linejoin="round"/>
<path d="M1583.500 314.0h3M1588.500 309.2h-1.500a2 2 0 0 0-2 2v6a2 2 0 0 0 2 2h.500" fill="none" stroke="#808080" stroke-width="1"/>
<rect x="1576.400" y="311.7" width="7.600" height="4.600" rx="1.500" fill="#fff" stroke="#808080" stroke-width="1.100"/>
<rect x="1586.600" y="307.9" width="4.600" height="2.600" rx="1.200" fill="#fff" stroke="#808080" stroke-width="1"/>
<rect x="1586.600" y="312.7" width="4.600" height="2.600" rx="1.200" fill="#fff" stroke="#808080" stroke-width="1"/>
<path d="M1589.200 317.4v5.400M1586.500 320.1h5.400" stroke="#5cb85c" stroke-width="1.600"/>
<rect x="1579.600" y="339.6" width="11.400" height="12.600" rx="1.500" fill="#f4f4f4" stroke="#707070" stroke-width="1"/>
<rect x="1576.200" y="337.4" width="11.600" height="11.600" rx="1.500" fill="#7db5e8" stroke="#5a9de0" stroke-width=".800"/>
<path d="M1577.400 348.4l4-5.600 4 5.600z" fill="#cfcfcf" stroke="#808080" stroke-width=".800"/>
<circle cx="1584.600" cy="340.4" r="1.200" fill="#e0a040"/>
<path d="M1589.400 347.8v5.400M1586.700 350.5h5.400" stroke="#5cb85c" stroke-width="1.600"/>
<circle cx="1582.400" cy="373.6" r="5.400" fill="#fbfbfb" stroke="#8a8a8a" stroke-width="1.500"/>
<path d="M1586.400 377.8l3.400 3.600" stroke="#808080" stroke-width="2.400" stroke-linecap="round"/>
<rect x="1576.200" y="398.1" width="15.400" height="15.400" rx="2.500" fill="#3f51b5"/>
<g fill="none" stroke="#fff" stroke-width="1.300"><path d="M1578.600 403.5v-3h3M1586.200 400.5h3v3M1589.200 408.1v3h-3M1581.600 411.1h-3v-3"/></g>
<path d="M1581.400 403.1l2.500 1.400v2.600l-2.500 1.400z" fill="#fff"/><path d="M1586.400 403.1l-2.500 1.400v2.600l2.500 1.400z" fill="#c5cae9"/>
<rect x="1576.600" y="428.4" width="9.800" height="8" rx="1.800" fill="#f4f4f4" stroke="#8a8a8a" stroke-width="1"/>
<rect x="1578.800" y="430.6" width="5" height="2" fill="#b0b0b0"/>
<rect x="1578.600" y="433.5" width="12.600" height="9.600" rx="2" fill="#fff" stroke="#6ea6e0" stroke-width="1.300"/>
<rect x="1582.200" y="437.2" width="5.600" height="2.200" rx=".500" fill="#3d7fd0"/>
<rect x="1584.800" y="462.0" width="6.600" height="9.200" rx=".800" fill="#fff" stroke="#4a90e2" stroke-width="1"/>
<path d="M1585.600 466.2l2.200 2 3-3.400" fill="none" stroke="#1976d2" stroke-width="1.200"/>
<path d="M1576 460.7l9.200-1.800v15.400l-9.200-1.800z" fill="#0a6cce"/>
<text x="1580.400" y="469.1" font-family="Liberation Sans, sans-serif" font-weight="bold" font-size="7" fill="#fff" text-anchor="middle">O</text>
<rect x="1576.200" y="489.3" width="15.200" height="15.200" rx="6.800" fill="#a0a0a0" stroke="#787878" stroke-width="1"/>
<g fill="none" stroke="#d2d2d2" stroke-width=".800"><path d="M1576.400 496.9h14.800M1577.400 493.2h12.800M1577.400 500.6h12.800M1583.800 489.3v15.200"/><ellipse cx="1583.800" cy="496.9" rx="3.600" ry="7.600"/></g>
<g fill="#6aa32a"><rect x="1585.8" y="521.9" width="1.6" height="1.400"/><rect x="1588.2" y="521.9" width="1.6" height="1.400"/><rect x="1590.4" y="521.9" width="1.2" height="1.400"/><rect x="1585.8" y="524.3" width="1.6" height="1.400"/><rect x="1588.2" y="524.3" width="1.6" height="1.400"/><rect x="1590.4" y="524.3" width="1.2" height="1.400"/><rect x="1585.8" y="526.7" width="1.6" height="1.400"/><rect x="1588.2" y="526.7" width="1.6" height="1.400"/><rect x="1590.4" y="526.7" width="1.2" height="1.400"/><rect x="1585.8" y="529.1" width="1.6" height="1.400"/><rect x="1588.2" y="529.1" width="1.6" height="1.400"/><rect x="1590.4" y="529.1" width="1.2" height="1.400"/><rect x="1585.8" y="531.5" width="1.6" height="1.400"/><rect x="1588.2" y="531.5" width="1.6" height="1.400"/><rect x="1590.4" y="531.5" width="1.2" height="1.400"/></g>
<path d="M1576 521.4l9.200-1.800v15.400l-9.200-1.800z" fill="#559a1c"/>
<text x="1580.400" y="530.0" font-family="Liberation Sans, sans-serif" font-weight="bold" font-size="7.500" fill="#fff" text-anchor="middle">X</text>
</g>
</svg>
<div id="labels">
<span class="t" style="left:708.17px;top:12.46px;font-size:10.8px;color:#fff;letter-spacing:0.206px;">MindManager - Organisation Fêtes 2023</span>
<span class="t" style="left:1354.97px;top:12.46px;font-size:10.8px;color:#fff;letter-spacing:-0.103px;">Guillaume Laill...</span>
<span class="t" style="left:1333.67px;top:13.86px;font-size:8.2px;color:#fff;letter-spacing:-0.081px;">GL</span>
<span class="t" style="left:12.56px;top:45.69px;font-size:11px;color:#444;letter-spacing:-0.189px;">Fichier</span>
<span class="t" style="left:71.06px;top:45.69px;font-size:11px;color:#444;letter-spacing:-0.181px;">Accueil</span>
<span class="t" style="left:132.06px;top:45.69px;font-size:11px;color:#444;letter-spacing:0.147px;">Insertion</span>
<span class="t" style="left:201.06px;top:45.69px;font-size:11px;color:#444;letter-spacing:-0.800px;">Tâche</span>
<span class="t" style="left:254.06px;top:45.69px;font-size:11px;color:#444;letter-spacing:0.080px;">Conception</span>
<span class="t" style="left:400.06px;top:45.69px;font-size:11px;color:#444;letter-spacing:-0.224px;">Avancé</span>
<span class="t" style="left:462.06px;top:45.69px;font-size:11px;color:#444;letter-spacing:-0.258px;">Révision</span>
<span class="t" style="left:529.56px;top:45.69px;font-size:11px;color:#444;letter-spacing:-0.036px;">Affichage</span>
<span class="t" style="left:600.56px;top:45.69px;font-size:11px;color:#444;letter-spacing:0.116px;">Aide</span>
<span class="t" style="left:335.56px;top:45.69px;font-size:11px;color:#333;letter-spacing:0.480px;font-weight:bold;">Format</span>
<span class="t" style="left:13.56px;top:109.89px;font-size:11px;color:#444;letter-spacing:0.148px;">Alignement</span>
<span class="t" style="left:80.06px;top:109.89px;font-size:11px;color:#444;letter-spacing:0.008px;">Mise en</span>
<span class="t" style="left:83.26px;top:123.79px;font-size:11px;color:#444;letter-spacing:-0.101px;">page</span>
<span class="t" style="left:128.56px;top:109.89px;font-size:11px;color:#444;letter-spacing:0.043px;">Ajuster la largeur</span>
<span class="t" style="left:146.86px;top:123.79px;font-size:11px;color:#444;letter-spacing:0.064px;">de sujet</span>
<span class="t" style="left:240.86px;top:109.89px;font-size:11px;color:#444;letter-spacing:-0.081px;">Reproduire la</span>
<span class="t" style="left:233.56px;top:123.79px;font-size:11px;color:#444;letter-spacing:0.048px;">mise en forme</span>
<span class="t" style="left:321.86px;top:109.89px;font-size:11px;color:#444;letter-spacing:-0.039px;">Style de</span>
<span class="t" style="left:325.16px;top:123.79px;font-size:11px;color:#444;letter-spacing:0.157px;">sujet</span>
<span class="t" style="left:371.16px;top:109.89px;font-size:11px;color:#444;letter-spacing:0.086px;">Forme du</span>
<span class="t" style="left:378.06px;top:123.79px;font-size:11px;color:#444;letter-spacing:0.233px;">sujet</span>
<span class="t" style="left:433.96px;top:109.89px;font-size:11px;color:#444;letter-spacing:0.072px;">Couleur de</span>
<span class="t" style="left:427.86px;top:123.79px;font-size:11px;color:#444;letter-spacing:-0.133px;">remplissage</span>
<span class="t" style="left:507.96px;top:109.89px;font-size:11px;color:#444;letter-spacing:0.025px;">Couleur</span>
<span class="t" style="left:504.06px;top:123.79px;font-size:11px;color:#444;">de ligne</span>
<span class="t" style="left:566.16px;top:109.89px;font-size:11px;color:#444;letter-spacing:-0.035px;">Ligne</span>
<span class="t" style="left:839.96px;top:109.89px;font-size:11px;color:#444;letter-spacing:0.013px;">Définir le style</span>
<span class="t" style="left:844.26px;top:123.79px;font-size:11px;color:#444;letter-spacing:0.181px;">par defaut</span>
<span class="t" style="left:1025.06px;top:109.89px;font-size:11px;color:#444;letter-spacing:-0.148px;">Réinitialiser</span>
<span class="t" style="left:1027.56px;top:123.79px;font-size:11px;color:#444;letter-spacing:0.148px;">par défaut</span>
<span class="t" style="left:1090.06px;top:109.89px;font-size:11px;color:#444;letter-spacing:0.124px;">Modifier le texte par</span>
<span class="t" style="left:1097.96px;top:123.79px;font-size:11px;color:#444;letter-spacing:-0.024px;">défaut des sujets</span>
<span class="t" style="left:919.16px;top:109.89px;font-size:11px;color:#b4b4b4;letter-spacing:0.005px;">Définir comme mise</span>
<span class="t" style="left:920.16px;top:123.79px;font-size:11px;color:#b4b4b4;letter-spacing:0.072px;">en page par défaut</span>
<span class="t" style="left:1209.36px;top:109.89px;font-size:11px;color:#b4b4b4;letter-spacing:0.135px;">Groupe</span>
<span class="t" style="left:80.06px;top:143.69px;font-size:11px;color:#666;letter-spacing:0.030px;">Mise en page</span>
<span class="t" style="left:345.76px;top:143.69px;font-size:11px;color:#666;letter-spacing:0.017px;">Mise en forme des objets</span>
<span class="t" style="left:697.06px;top:143.69px;font-size:11px;color:#666;letter-spacing:-0.598px;">Police</span>
<span class="t" style="left:969.76px;top:143.69px;font-size:11px;color:#666;letter-spacing:-0.012px;">Valeurs par défaut</span>
<span class="t" style="left:1207.56px;top:143.69px;font-size:11px;color:#666;letter-spacing:-0.021px;">Groupes</span>
<span class="t" style="left:617.06px;top:83.69px;font-size:11px;color:#222;letter-spacing:-0.142px;">Segoe UI</span>
<span class="t" style="left:733.26px;top:83.69px;font-size:11px;color:#222;letter-spacing:-0.170px;">14</span>
<span class="t" style="left:1422.56px;top:44.19px;font-size:11px;color:#f6f6f6;letter-spacing:-0.575px;">Rechercher</span>
<span class="t" style="left:620.92px;top:110.76px;font-size:17px;color:#6a6a6a;font-weight:bold;font-family:'Liberation Serif',serif;">G</span>
<span class="t" style="left:645.62px;top:110.76px;font-size:17px;color:#6a6a6a;font-weight:bold;font-style:italic;font-family:'Liberation Serif',serif;">I</span>
<span class="t" style="left:670.32px;top:110.76px;font-size:17px;color:#6a6a6a;font-weight:bold;font-family:'Liberation Serif',serif;">S</span>
<span class="t" style="left:694.22px;top:110.76px;font-size:17px;color:#6a6a6a;font-weight:bold;font-family:'Liberation Serif',serif;">T</span>
<span class="t" style="left:720.90px;top:109.24px;font-size:15px;color:#2a5db0;font-weight:bold;font-family:'Liberation Serif',serif;">A</span>
<span class="t" style="left:781.82px;top:82.36px;font-size:17px;color:#6a6a6a;font-weight:bold;font-family:'Liberation Serif',serif;">A</span>
<span class="t" style="left:804.76px;top:85.21px;font-size:13.6px;color:#6a6a6a;font-weight:bold;font-family:'Liberation Serif',serif;">A</span>
<span class="t" style="left:122.38px;top:178.13px;font-size:10.6px;color:#e0883a;letter-spacing:0.277px;-webkit-text-stroke:0.35px #e0883a;">Informations de map masquées par</span>
<span class="t" style="left:122.38px;top:192.13px;font-size:10.6px;color:#6d8199;letter-spacing:0.307px;font-style:italic;">La fonction Afficher la branche seule</span>
<span class="t" style="left:790.40px;top:446.74px;font-size:25px;color:#111;letter-spacing:0.793px;will-change:transform;">Noël</span>
<span class="t" style="left:739.40px;top:578.64px;font-size:25px;color:#111;letter-spacing:0.526px;will-change:transform;">Organiser le repas</span>
<span class="t" style="left:739.40px;top:641.54px;font-size:25px;color:#111;letter-spacing:0.534px;will-change:transform;">Acheter des cadeaux</span>
<span class="t" style="left:67.46px;top:818.69px;font-size:11px;color:#1a66d2;letter-spacing:0.075px;font-weight:bold;">Organisation Fêtes 2023*</span>
<span class="t" style="left:1362.76px;top:842.69px;font-size:11px;color:#555;letter-spacing:-0.056px;">139 %</span>
</div>
</body></html>
